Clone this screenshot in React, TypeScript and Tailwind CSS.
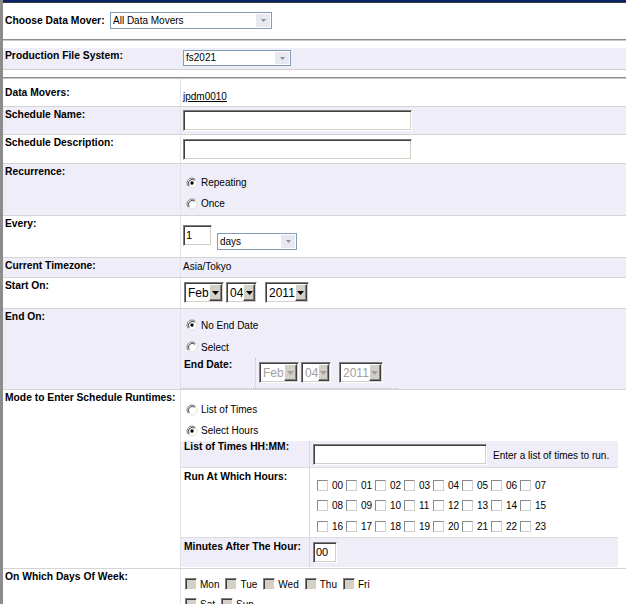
import React from 'react';

const LAV = 'bg-[#efedf8]';

function Radio({ checked = false }: { checked?: boolean }) {
  return (
    <svg width="12" height="12" viewBox="0 0 12 12" className="shrink-0">
      <circle cx="6" cy="6" r="5" fill="#fff" />
      <path d="M2.46 9.54A5 5 0 0 1 9.54 2.46" fill="none" stroke="#808080" />
      <path d="M3.2 8.8A4 4 0 0 1 8.8 3.2" fill="none" stroke="#404040" />
      <path d="M9.54 2.46A5 5 0 0 1 2.46 9.54" fill="none" stroke="#e4e2da" />
      {checked && <circle cx="6" cy="6" r="1.7" fill="#000" />}
    </svg>
  );
}

function Arrow({ color }: { color: string }) {
  return (
    <svg width="7" height="4" viewBox="0 0 7 4">
      <path d="M0 0h7L3.5 4z" fill={color} />
    </svg>
  );
}

function ClassicSelect({
  value,
  width,
  disabled = false,
}: {
  value: string;
  width: string;
  disabled?: boolean;
}) {
  return (
    <div
      className={`flex h-[21px] ${width} shrink-0 border border-b-white border-l-[#808080] border-r-white border-t-[#808080] bg-white p-[1px] shadow-[inset_1px_1px_0_#404040,inset_-1px_-1px_0_#d4d0c8]`}
    >
      <div
        className={`flex flex-1 items-center pl-[2px] text-[12px] leading-none ${
          disabled ? 'text-[#a0a0a0]' : 'text-black'
        }`}
      >
        {value}
      </div>
      <div className="flex w-[15px] items-center justify-center border border-b-[#404040] border-l-white border-r-[#404040] border-t-white bg-[#d4d0c8] shadow-[inset_-1px_-1px_0_#808080]">
        <Arrow color={disabled ? '#a0a0a0' : '#000'} />
      </div>
    </div>
  );
}

function XpSelect({ value, className }: { value: string; className: string }) {
  return (
    <div className={`flex shrink-0 border border-[#7f9db9] bg-white ${className}`}>
      <div className="flex flex-1 items-center pl-[2px] text-[10px] leading-none">{value}</div>
      <div className="my-[1px] mr-[1px] flex w-[14px] items-center justify-center bg-[#e8e8f0]">
        <svg width="5" height="3" viewBox="0 0 5 3">
          <path d="M0 0h5L2.5 3z" fill="#8a8fa0" />
        </svg>
      </div>
    </div>
  );
}

function TextBox({ className, value = '' }: { className: string; value?: string }) {
  return (
    <div
      className={`flex shrink-0 items-center border border-b-white border-l-[#808080] border-r-white border-t-[#808080] bg-white pl-[2px] text-[11px] leading-none shadow-[inset_1px_1px_0_#404040,inset_-1px_-1px_0_#d4d0c8] ${className}`}
    >
      {value}
    </div>
  );
}

function HourBox() {
  return (
    <span className="h-[11px] w-[11px] shrink-0 border border-b-[#cfcfcf] border-l-[#8a8a8a] border-r-[#cfcfcf] border-t-[#8a8a8a] bg-white" />
  );
}

function DayBox() {
  return (
    <span className="h-[12px] w-[12px] shrink-0 border border-b-white border-l-[#808080] border-r-white border-t-[#808080] bg-[#d4d0c8] shadow-[inset_1px_1px_0_#404040]" />
  );
}

function RadioLine({ label, checked, h }: { label: string; checked?: boolean; h: string }) {
  return (
    <div className={`flex ${h} items-center gap-[3px] text-[10px]`}>
      <Radio checked={checked} />
      <span>{label}</span>
    </div>
  );
}

function Row({
  label,
  tint = false,
  h,
  labelPt = 'pt-[2px]',
  children,
}: {
  label: string;
  tint?: boolean;
  h: string;
  labelPt?: string;
  children?: React.ReactNode;
}) {
  return (
    <div className={`flex ${h} border-b border-[#d4d4d4] ${tint ? LAV : 'bg-white'}`}>
      <div className={`w-[177px] shrink-0 pl-[2px] ${labelPt} text-[10.3px] font-bold leading-[12px]`}>
        {label}
      </div>
      <div className="min-w-0 flex-1 border-l border-[#e3e3ea]">{children}</div>
    </div>
  );
}

const hours = Array.from({ length: 24 }, (_, i) => String(i).padStart(2, '0'));

export default function App() {
  return (
    <div className="flex min-h-screen bg-white font-['Liberation_Sans',Arial,sans-serif] text-black">
      <div className="w-[3px] shrink-0 bg-[#8c8c8c]" />
      <div className="min-w-0 flex-1">
        <div className="h-[2px] bg-[#0a246a]" />
        <div className="h-[1px] bg-[#3c3c3c]" />

        {/* data mover picker */}
        <div className="flex h-[35px] items-center pl-[2px]">
          <div className="w-[105px] text-[10.3px] font-bold leading-[12px]">Choose Data Mover:</div>
          <XpSelect value="All Data Movers" className="h-[17px] w-[162px]" />
        </div>
        <div className="h-[1px]" />
        <div className="h-[2px] border-t border-b border-t-[#8c8c8c] border-b-[#c8c8c8]" />
        <div className="h-[7px]" />

        <div className={`flex h-[22px] border-b border-[#cfcfcf] ${LAV}`}>
          <div className="w-[180px] shrink-0 pl-[2px] pt-[2px] text-[10.3px] font-bold leading-[12px]">
            Production File System:
          </div>
          <div className="pt-[2px]">
            <XpSelect value="fs2021" className="h-[16px] w-[108px]" />
          </div>
        </div>
        <div className="h-[7px]" />
        <div className="h-[2px] border-t border-b border-t-[#8c8c8c] border-b-[#c8c8c8]" />

        <Row label="Data Movers:" h="h-[28px]" labelPt="pt-[8px]">
          <div className="pl-[2px] pt-[12px] text-[10px] leading-[12px] underline">jpdm0010</div>
        </Row>

        <Row label="Schedule Name:" tint h="h-[28px]">
          <div className="pl-[2px] pt-[3px]">
            <TextBox className="h-[21px] w-[229px]" />
          </div>
        </Row>

        <Row label="Schedule Description:" h="h-[29px]">
          <div className="pl-[2px] pt-[4px]">
            <TextBox className="h-[21px] w-[229px]" />
          </div>
        </Row>

        <Row label="Recurrence:" tint h="h-[52px]">
          <div className="pl-[5px] pt-[8px]">
            <RadioLine label="Repeating" checked h="h-[21px]" />
            <RadioLine label="Once" h="h-[21px]" />
          </div>
        </Row>

        <Row label="Every:" h="h-[42px]">
          <div className="flex items-start pl-[2px] pt-[9px]">
            <TextBox className="h-[21px] w-[29px]" value="1" />
            <div className="ml-[5px] mt-[8px]">
              <XpSelect value="days" className="h-[17px] w-[80px]" />
            </div>
          </div>
        </Row>

        <Row label="Current Timezone:" tint h="h-[20px]">
          <div className="pl-[2px] pt-[3px] text-[10px] leading-[12px]">Asia/Tokyo</div>
        </Row>

        <Row label="Start On:" h="h-[31px]">
          <div className="flex pl-[3px] pt-[4px]">
            <ClassicSelect value="Feb" width="w-[40px]" />
            <div className="w-[2px]" />
            <ClassicSelect value="04" width="w-[31px]" />
            <div className="w-[8px]" />
            <ClassicSelect value="2011" width="w-[44px]" />
          </div>
        </Row>

        <Row label="End On:" tint h="h-[81px]">
          <div className="pl-[5px] pt-[5px]">
            <RadioLine label="No End Date" checked h="h-[22px]" />
            <RadioLine label="Select" h="h-[22px]" />
          </div>
          <div className="flex h-[31px] w-[217px] border-b border-dotted border-[#c4c4cc]">
            <div className="w-[75px] border-r border-dotted border-[#c4c4cc] pl-[3px] pt-[1px] text-[10.3px] font-bold leading-[12px]">
              End Date:
            </div>
            <div className="flex pl-[3px] pt-[4px]">
              <ClassicSelect value="Feb" width="w-[40px]" disabled />
              <div className="w-[2px]" />
              <ClassicSelect value="04" width="w-[30px]" disabled />
              <div className="w-[8px]" />
              <ClassicSelect value="2011" width="w-[44px]" disabled />
            </div>
          </div>
        </Row>

        <Row label="Mode to Enter Schedule Runtimes:" h="h-[179px]">
          <div className="pl-[5px] pt-[9px]">
            <RadioLine label="List of Times" h="h-[21px]" />
            <RadioLine label="Select Hours" checked h="h-[21px]" />
          </div>
          <div className="w-[437px]">
            <div className={`flex h-[27px] border-b border-[#dcdce4] ${LAV}`}>
              <div className="w-[129px] shrink-0 border-r border-[#d8d8e0] pl-[3px] text-[10.3px] font-bold leading-[12px]">
                List of Times HH:MM:
              </div>
              <div className="flex items-start pl-[3px] pt-[3px]">
                <TextBox className="h-[21px] w-[174px]" />
                <span className="ml-[6px] mt-[6px] text-[10px] leading-[12px]">
                  Enter a list of times to run.
                </span>
              </div>
            </div>
            <div className="flex h-[70px] border-b border-[#dcdce4] bg-white">
              <div className="w-[129px] shrink-0 border-r border-[#d8d8e0] pl-[3px] pt-[3px] text-[10.3px] font-bold leading-[12px]">
                Run At Which Hours:
              </div>
              <div className="grid grid-cols-[repeat(8,29px)] pl-[7px] pt-[7px]">
                {hours.map((hr) => (
                  <div key={hr} className="flex h-[20px] items-center gap-[4px] text-[10px]">
                    <HourBox />
                    <span>{hr}</span>
                  </div>
                ))}
              </div>
            </div>
            <div className={`flex h-[29px] ${LAV}`}>
              <div className="w-[129px] shrink-0 border-r border-[#d8d8e0] pl-[3px] pt-[3px] text-[10.3px] font-bold leading-[12px]">
                Minutes After The Hour:
              </div>
              <div className="pl-[3px] pt-[4px]">
                <TextBox className="h-[21px] w-[24px]" value="00" />
              </div>
            </div>
          </div>
        </Row>

        <Row label="On Which Days Of Week:" h="h-[50px]">
          <div className="pl-[4px] pt-[5px]">
            <div className="flex h-[20px] items-center gap-[6px] text-[10px]">
              {['Mon', 'Tue', 'Wed', 'Thu', 'Fri'].map((d) => (
                <div key={d} className="flex items-center gap-[3px]">
                  <DayBox />
                  <span>{d}</span>
                </div>
              ))}
            </div>
            <div className="flex h-[20px] items-center gap-[6px] text-[10px]">
              {['Sat', 'Sun'].map((d) => (
                <div key={d} className="flex items-center gap-[3px]">
                  <DayBox />
                  <span>{d}</span>
                </div>
              ))}
            </div>
          </div>
        </Row>
      </div>
    </div>
  );
}
